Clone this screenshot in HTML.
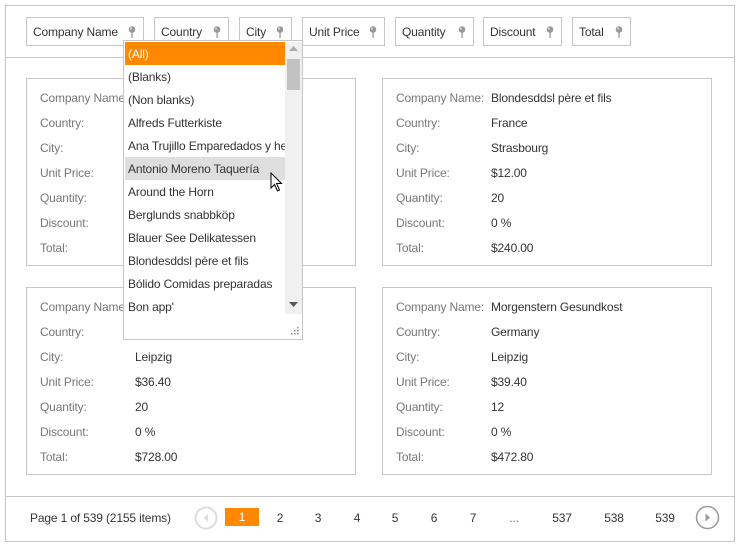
<!DOCTYPE html>
<html><head><meta charset="utf-8"><style>
*{box-sizing:border-box;margin:0;padding:0}
body{width:741px;height:548px;background:#fff;font-family:"Segoe UI","Liberation Sans",sans-serif;font-size:12px;color:#333;position:relative;overflow:hidden;letter-spacing:-0.15px}
.a{position:absolute}
.box{position:absolute;border:1px solid #c6c6c6}
.fb{position:absolute;top:17px;height:29px;border:1px solid #c6c6c6;line-height:28px;padding-left:6px;color:#333}
.fb svg{position:absolute;right:7px;top:8px}
.card{position:absolute;border:1px solid #c6c6c6;width:330px;height:188px}
.lab{position:absolute;left:13px;color:#777}
.val{position:absolute;color:#333}
.dd{position:absolute;left:123px;top:40px;width:180px;height:300px;border:1px solid #c6c6c6;background:#fff}
.it{position:absolute;left:1px;width:160px;height:23px;line-height:24px;padding-left:3px;white-space:nowrap;overflow:hidden}
.pg{position:absolute;top:509px;line-height:18px;text-align:center;width:24px}
</style></head><body>
<div class="box" style="left:5px;top:5px;width:730px;height:537px"></div>
<div class="a" style="left:6px;top:57px;width:728px;height:1px;background:#c6c6c6"></div>
<div class="a" style="left:6px;top:496px;width:728px;height:1px;background:#c6c6c6"></div>

<svg width="0" height="0" style="position:absolute"><defs><g id="pin"><circle cx="4" cy="3.5" r="3.3" fill="#999"/><circle cx="3" cy="2.5" r="1" fill="#ddd"/><rect x="3.4" y="6" width="1.3" height="6" fill="#999"/></g></defs></svg>

<div class="fb" style="left:26px;width:118px">Company Name<svg width="8" height="12"><use href="#pin"/></svg></div>
<div class="fb" style="left:154px;width:75px">Country<svg width="8" height="12"><use href="#pin"/></svg></div>
<div class="fb" style="left:239px;width:53px">City<svg width="8" height="12"><use href="#pin"/></svg></div>
<div class="fb" style="left:302px;width:83px">Unit Price<svg width="8" height="12"><use href="#pin"/></svg></div>
<div class="fb" style="left:395px;width:79px">Quantity<svg width="8" height="12"><use href="#pin"/></svg></div>
<div class="fb" style="left:483px;width:79px">Discount<svg width="8" height="12"><use href="#pin"/></svg></div>
<div class="fb" style="left:572px;width:59px">Total<svg width="8" height="12"><use href="#pin"/></svg></div>

<div class="card" style="left:26px;top:78px">
<div class="lab" style="top:12px">Company Name:</div><div class="lab" style="top:37px">Country:</div><div class="lab" style="top:62px">City:</div><div class="lab" style="top:87px">Unit Price:</div><div class="lab" style="top:112px">Quantity:</div><div class="lab" style="top:137px">Discount:</div><div class="lab" style="top:162px">Total:</div>
</div>
<div class="card" style="left:382px;top:78px">
<div class="lab" style="top:12px">Company Name:</div><div class="lab" style="top:37px">Country:</div><div class="lab" style="top:62px">City:</div><div class="lab" style="top:87px">Unit Price:</div><div class="lab" style="top:112px">Quantity:</div><div class="lab" style="top:137px">Discount:</div><div class="lab" style="top:162px">Total:</div>
<div class="val" style="left:108px;top:12px">Blondesddsl père et fils</div><div class="val" style="left:108px;top:37px">France</div><div class="val" style="left:108px;top:62px">Strasbourg</div><div class="val" style="left:108px;top:87px">$12.00</div><div class="val" style="left:108px;top:112px">20</div><div class="val" style="left:108px;top:137px">0 %</div><div class="val" style="left:108px;top:162px">$240.00</div>
</div>
<div class="card" style="left:26px;top:287px">
<div class="lab" style="top:12px">Company Name:</div><div class="lab" style="top:37px">Country:</div><div class="lab" style="top:62px">City:</div><div class="lab" style="top:87px">Unit Price:</div><div class="lab" style="top:112px">Quantity:</div><div class="lab" style="top:137px">Discount:</div><div class="lab" style="top:162px">Total:</div>
<div class="val" style="left:108px;top:62px">Leipzig</div><div class="val" style="left:108px;top:87px">$36.40</div><div class="val" style="left:108px;top:112px">20</div><div class="val" style="left:108px;top:137px">0 %</div><div class="val" style="left:108px;top:162px">$728.00</div>
</div>
<div class="card" style="left:382px;top:287px">
<div class="lab" style="top:12px">Company Name:</div><div class="lab" style="top:37px">Country:</div><div class="lab" style="top:62px">City:</div><div class="lab" style="top:87px">Unit Price:</div><div class="lab" style="top:112px">Quantity:</div><div class="lab" style="top:137px">Discount:</div><div class="lab" style="top:162px">Total:</div>
<div class="val" style="left:108px;top:12px">Morgenstern Gesundkost</div><div class="val" style="left:108px;top:37px">Germany</div><div class="val" style="left:108px;top:62px">Leipzig</div><div class="val" style="left:108px;top:87px">$39.40</div><div class="val" style="left:108px;top:112px">12</div><div class="val" style="left:108px;top:137px">0 %</div><div class="val" style="left:108px;top:162px">$472.80</div>
</div>

<div class="dd">
<div class="it" style="top:1px;background:#ff8800;color:#fff">(All)</div>
<div class="it" style="top:24px">(Blanks)</div>
<div class="it" style="top:47px">(Non blanks)</div>
<div class="it" style="top:70px">Alfreds Futterkiste</div>
<div class="it" style="top:93px">Ana Trujillo Emparedados y helados</div>
<div class="it" style="top:116px;background:#dedede">Antonio Moreno Taquería</div>
<div class="it" style="top:139px">Around the Horn</div>
<div class="it" style="top:162px">Berglunds snabbköp</div>
<div class="it" style="top:185px">Blauer See Delikatessen</div>
<div class="it" style="top:208px">Blondesddsl père et fils</div>
<div class="it" style="top:231px">Bólido Comidas preparadas</div>
<div class="it" style="top:254px">Bon app'</div>
<div class="a" style="left:161px;top:1px;width:17px;height:272px;background:#f0f0f0"></div>
<div class="a" style="left:163px;top:18px;width:13px;height:31px;background:#c2c2c2"></div>
<svg class="a" style="left:165px;top:5px" width="9" height="6"><path d="M0 5L4.5 0L9 5Z" fill="#aaa"/></svg>
<svg class="a" style="left:165px;top:261px" width="9" height="6"><path d="M0 0L4.5 5L9 0Z" fill="#555"/></svg>
<svg class="a" style="left:164px;top:285px" width="12" height="12" fill="#888"><rect x="9" y="1" width="1.5" height="1.5"/><rect x="6" y="4" width="1.5" height="1.5"/><rect x="9" y="4" width="1.5" height="1.5"/><rect x="3" y="7" width="1.5" height="1.5"/><rect x="6" y="7" width="1.5" height="1.5"/><rect x="9" y="7" width="1.5" height="1.5"/></svg>
</div>
<svg class="a" style="left:270px;top:172px" width="14" height="21"><path d="M1 1L1 16L4.5 12.5L7.5 19L9.5 18L6.5 11.5L11.5 11.5Z" fill="#fff" stroke="#000" stroke-width="1"/></svg>

<div class="a" style="left:30px;top:509px;line-height:18px">Page 1 of 539 (2155 items)</div>
<svg class="a" style="left:194px;top:506px" width="24" height="24"><circle cx="12" cy="12" r="10.5" fill="none" stroke="#ddd" stroke-width="2"/><path d="M14 8L9.5 12L14 16Z" fill="#ddd"/></svg>
<div class="a" style="left:225px;top:508px;width:34px;height:18px;background:#ff8800;color:#fff;text-align:center;line-height:18px">1</div>
<div class="pg" style="left:268px">2</div>
<div class="pg" style="left:306px">3</div>
<div class="pg" style="left:345px">4</div>
<div class="pg" style="left:383px">5</div>
<div class="pg" style="left:422px">6</div>
<div class="pg" style="left:461px">7</div>
<div class="pg" style="left:502px;color:#666">...</div>
<div class="pg" style="left:545px;width:34px">537</div>
<div class="pg" style="left:597px;width:34px">538</div>
<div class="pg" style="left:648px;width:34px">539</div>
<svg class="a" style="left:695px;top:505px" width="25" height="25"><circle cx="12.5" cy="12.5" r="11" fill="none" stroke="#999" stroke-width="1.5"/><path d="M10.5 8.5L15 12.5L10.5 16.5Z" fill="#999"/></svg>
</body></html>
